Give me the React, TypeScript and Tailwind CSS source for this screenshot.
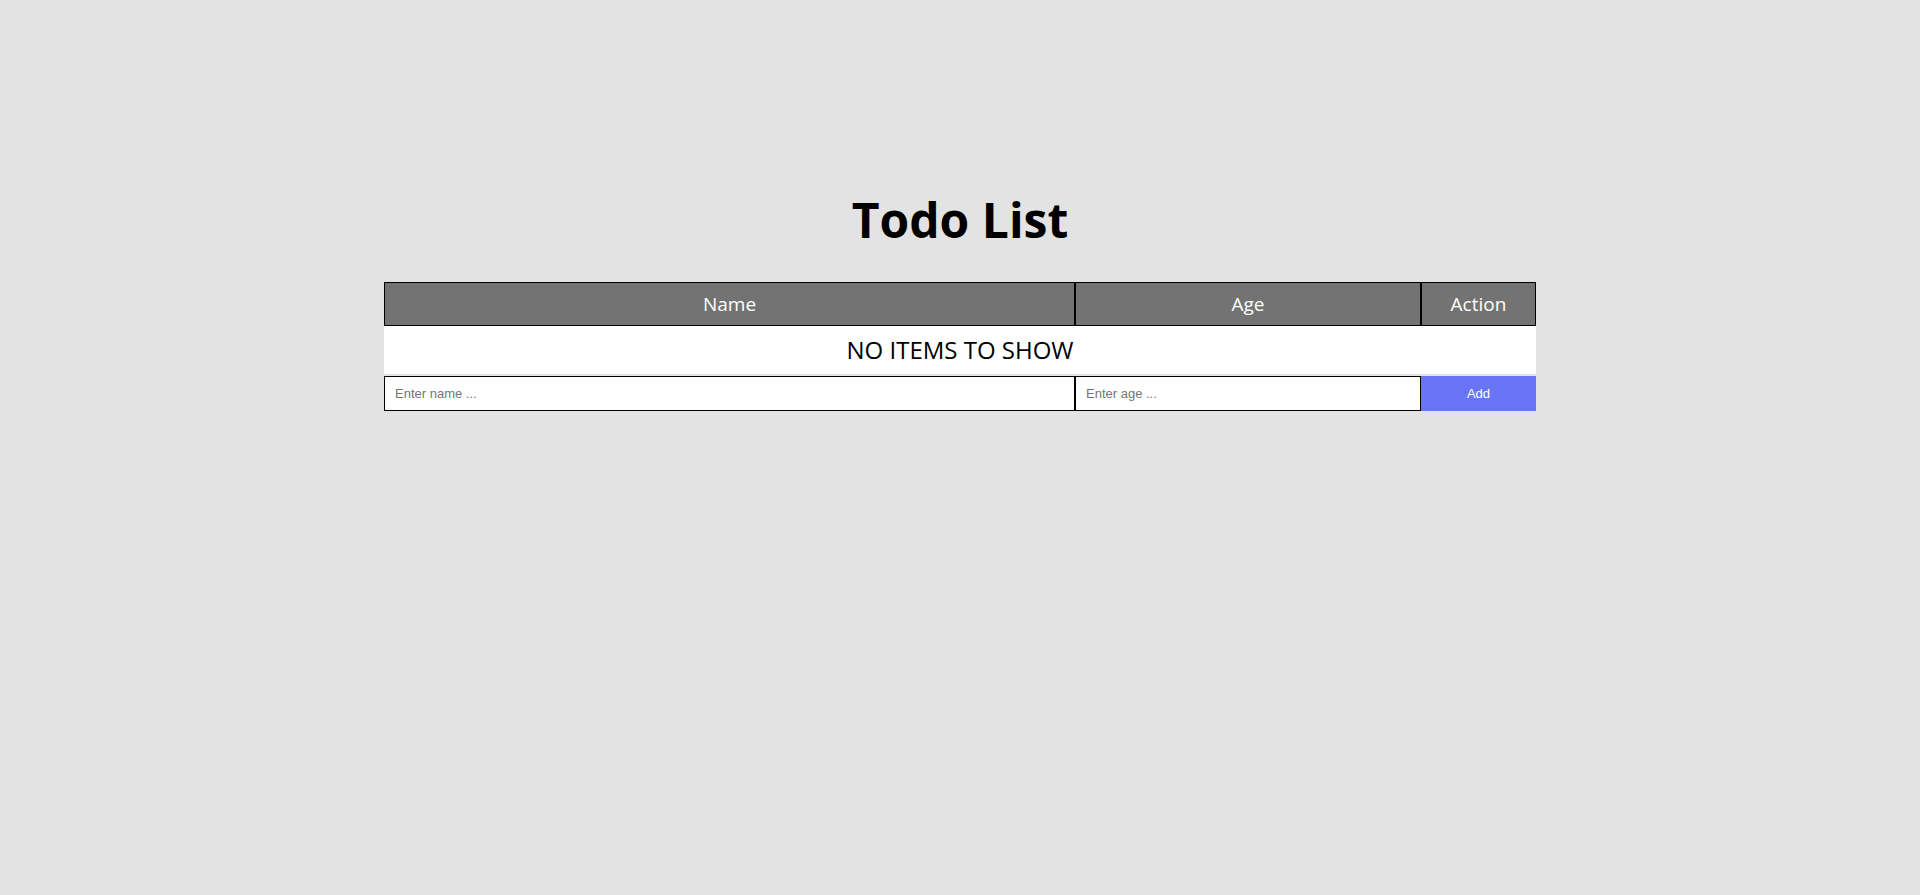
import { useState } from "react";

interface Todo {
  name: string;
  age: string;
}

export default function App() {
  const [todos, setTodos] = useState<Todo[]>([]);
  const [name, setName] = useState("");
  const [age, setAge] = useState("");

  const addTodo = () => {
    if (!name.trim()) return;
    setTodos([...todos, { name, age }]);
    setName("");
    setAge("");
  };

  return (
    <div className="min-h-screen bg-[#e3e3e3] font-['Open_Sans',sans-serif] text-black">
      <div className="w-[1152px] mx-auto pt-[196px]">
        <h1 className="text-[48px] font-bold leading-none text-center h-[48px]">Todo List</h1>

        <div className="mt-[38px]">
          {/* header */}
          <div className="grid grid-cols-[691px_346px_115px] bg-[#737373] text-white text-[19px]">
            <div className="h-[44px] border border-black flex items-center justify-center">Name</div>
            <div className="h-[44px] border border-black flex items-center justify-center">Age</div>
            <div className="h-[44px] border border-black flex items-center justify-center">Action</div>
          </div>

          {/* body */}
          {todos.length === 0 ? (
            <div className="h-[48px] bg-white flex items-center justify-center text-[24px]">
              NO ITEMS TO SHOW
            </div>
          ) : (
            todos.map((todo, i) => (
              <div key={i} className="grid grid-cols-[691px_346px_115px] bg-white h-[48px] text-[18px]">
                <div className="flex items-center justify-center">{todo.name}</div>
                <div className="flex items-center justify-center">{todo.age}</div>
                <div className="flex items-center justify-center">
                  <button
                    className="text-[13px] font-['Liberation_Sans',sans-serif] text-red-600"
                    onClick={() => setTodos(todos.filter((_, j) => j !== i))}
                  >
                    Delete
                  </button>
                </div>
              </div>
            ))
          )}

          {/* add row */}
          <div className="grid grid-cols-[691px_346px_115px] mt-[2px] h-[35px] font-['Liberation_Sans',sans-serif] text-[13px]">
            <input
              className="h-full bg-white border border-black px-[10px] outline-none placeholder:text-[#757575]"
              placeholder="Enter name ..."
              value={name}
              onChange={(e) => setName(e.target.value)}
            />
            <input
              className="h-full bg-white border border-black px-[10px] outline-none placeholder:text-[#757575]"
              placeholder="Enter age ..."
              value={age}
              onChange={(e) => setAge(e.target.value)}
            />
            <button className="h-full bg-[#6875f5] text-white" onClick={addTodo}>
              Add
            </button>
          </div>
        </div>
      </div>
    </div>
  );
}
